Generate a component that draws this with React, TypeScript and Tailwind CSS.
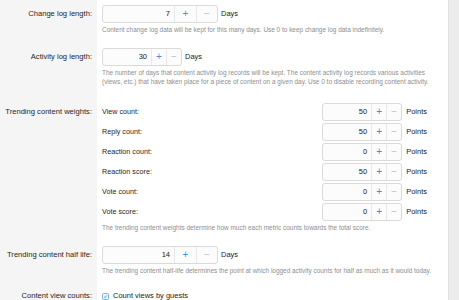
import React from "react";

function Spin({ value, wide }: { value: string; wide?: boolean }) {
  return (
    <div
      className={`flex h-[18px] shrink-0 overflow-hidden rounded-[3px] border border-[#dadada] bg-[#fcfcfc] ${
        wide ? "w-[116px]" : "w-[80px]"
      }`}
    >
      <div className="flex flex-1 items-center justify-end pr-[4px] text-[7.5px] text-[#222]">{value}</div>
      <div
        className={`flex items-center justify-center border-l border-[#e8e8e8] text-[10px] leading-none text-[#3f93dc] ${
          wide ? "w-[22px]" : "w-[15px]"
        }`}
      >
        +
      </div>
      <div
        className={`flex items-center justify-center border-l border-[#e8e8e8] text-[10px] leading-none text-[#b3bfcb] ${
          wide ? "w-[21px]" : "w-[15px]"
        }`}
      >
        −
      </div>
    </div>
  );
}

function Row({
  label,
  children,
  pb,
}: {
  label: string;
  children: React.ReactNode;
  pb: string;
}) {
  return (
    <div className="flex">
      <div className={`w-[97px] shrink-0 bg-[#f5f5f5] pr-[5px] pt-[5px] text-right text-[7.6px] leading-[18px] text-[#262626] ${pb}`}>
        {label}
      </div>
      <div className={`flex-1 pl-[5px] pr-[5px] pt-[5px] ${pb}`}>{children}</div>
    </div>
  );
}

function Hint({ children }: { children: React.ReactNode }) {
  return <div className="mt-[2px] max-w-[330px] text-[6.45px] leading-[9px] text-[#8e8e8e]">{children}</div>;
}

const weights: [string, string][] = [
  ["View count:", "50"],
  ["Reply count:", "50"],
  ["Reaction count:", "0"],
  ["Reaction score:", "50"],
  ["Vote count:", "0"],
  ["Vote score:", "0"],
];

export default function App() {
  return (
    <div
      className="flex h-[300px] w-[459px] overflow-hidden bg-white"
      style={{ fontFamily: '"Liberation Sans", Arial, sans-serif' }}
    >
      <div className="flex w-[448px] flex-col">
        <Row label="Change log length:" pb="pb-[9px]">
          <div className="flex items-center">
            <Spin value="7" wide />
            <span className="ml-[3px] text-[7.5px] text-[#222]">Days</span>
          </div>
          <Hint>Content change log data will be kept for this many days. Use 0 to keep change log data indefinitely.</Hint>
        </Row>
        <Row label="Activity log length:" pb="pb-[12px]">
          <div className="flex items-center">
            <Spin value="30" />
            <span className="ml-[3px] text-[7.5px] text-[#222]">Days</span>
          </div>
          <Hint>
            The number of days that content activity log records will be kept. The content activity log records various
            activities (views, etc.) that have taken place for a piece of content on a given day. Use 0 to disable
            recording content activity.
          </Hint>
        </Row>
        <Row label="Trending content weights:" pb="pb-[9px]">
          <div className="flex w-[325px] flex-col gap-[2px]">
            {weights.map(([l, v]) => (
              <div key={l} className="flex h-[18px] items-center">
                <span className="flex-1 text-[7.2px] text-[#262626]">{l}</span>
                <Spin value={v} />
                <span className="ml-[4px] text-[7.5px] text-[#222]">Points</span>
              </div>
            ))}
          </div>
          <Hint>The trending content weights determine how much each metric counts towards the total score.</Hint>
        </Row>
        <Row label="Trending content half life:" pb="pb-[11px]">
          <div className="flex items-center">
            <Spin value="14" wide />
            <span className="ml-[3px] text-[7.5px] text-[#222]">Days</span>
          </div>
          <Hint>The trending content half-life determines the point at which logged activity counts for half as much as it would today.</Hint>
        </Row>
        <div className="flex flex-1">
          <div className="w-[97px] shrink-0 bg-[#f5f5f5] pr-[5px] pt-[5px] text-right text-[7.6px] leading-[10px] text-[#262626]">
            Content view counts:
          </div>
          <div className="flex flex-1 items-start pl-[5px] pt-[5px]">
            <div className="flex h-[10px] items-center">
              <div className="flex h-[7px] w-[7px] items-center justify-center rounded-[1.5px] border border-[#7fb2de] bg-[#eef5fc]">
                <svg viewBox="0 0 10 10" className="h-[5px] w-[5px]">
                  <path d="M2 5.2 L4.2 7.3 L8 2.8" fill="none" stroke="#4a8fd0" strokeWidth="1.6" />
                </svg>
              </div>
              <span className="ml-[4px] text-[7.5px] text-[#222]">Count views by guests</span>
            </div>
          </div>
        </div>
      </div>
      <div className="w-[11px] shrink-0 border-l border-[#e0e0e0] bg-[#ececec]" />
    </div>
  );
}
